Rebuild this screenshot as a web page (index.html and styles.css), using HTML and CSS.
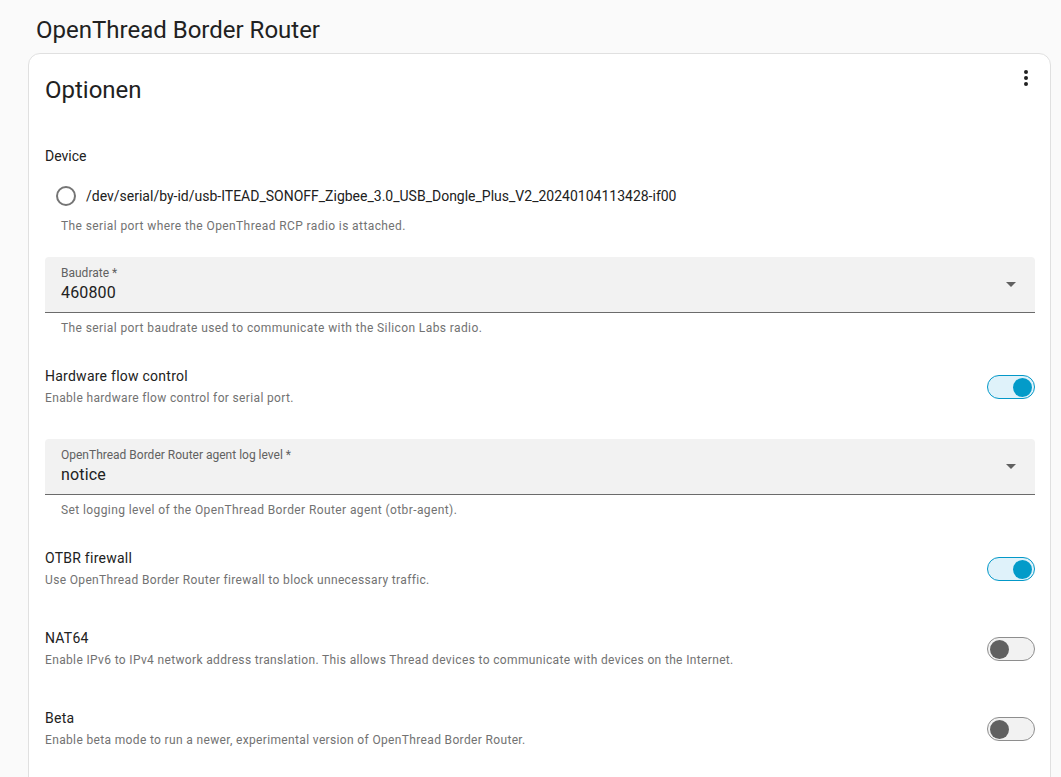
FILE: index.html
```html
<!DOCTYPE html>
<html lang="de">
<head>
  <meta charset="UTF-8">
  <meta name="viewport" content="width=device-width, initial-scale=1.0">
  <title>OpenThread Border Router</title>
  <link rel="stylesheet" href="styles.css">
</head>
<body>
  <div class="page">
    <h1 class="page-title">OpenThread Border Router</h1>

    <div class="card">
      <div class="card-header">
        <h2>Optionen</h2>
        <svg class="menu-icon" viewBox="0 0 24 24" width="24" height="24">
          <path d="M12,16A2,2 0 0,1 14,18A2,2 0 0,1 12,20A2,2 0 0,1 10,18A2,2 0 0,1 12,16M12,10A2,2 0 0,1 14,12A2,2 0 0,1 12,14A2,2 0 0,1 10,12A2,2 0 0,1 12,10M12,4A2,2 0 0,1 14,6A2,2 0 0,1 12,8A2,2 0 0,1 10,6A2,2 0 0,1 12,4Z"/>
        </svg>
      </div>

      <div class="field-label">Device</div>
      <label class="radio-row">
        <span class="radio"></span>
        <span>/dev/serial/by-id/usb-ITEAD_SONOFF_Zigbee_3.0_USB_Dongle_Plus_V2_20240104113428-if00</span>
      </label>
      <div class="helper">The serial port where the OpenThread RCP radio is attached.</div>

      <div class="select">
        <div class="select-text">
          <div class="select-label">Baudrate *</div>
          <div class="select-value">460800</div>
        </div>
        <span class="caret"></span>
      </div>
      <div class="helper helper-field">The serial port baudrate used to communicate with the Silicon Labs radio.</div>

      <div class="switch-row after-helper">
        <div>
          <div class="row-title">Hardware flow control</div>
          <div class="row-desc">Enable hardware flow control for serial port.</div>
        </div>
        <span class="switch on"><span class="knob"></span></span>
      </div>

      <div class="select select-after-row">
        <div class="select-text">
          <div class="select-label">OpenThread Border Router agent log level *</div>
          <div class="select-value">notice</div>
        </div>
        <span class="caret"></span>
      </div>
      <div class="helper helper-field">Set logging level of the OpenThread Border Router agent (otbr-agent).</div>

      <div class="switch-row after-helper">
        <div>
          <div class="row-title">OTBR firewall</div>
          <div class="row-desc">Use OpenThread Border Router firewall to block unnecessary traffic.</div>
        </div>
        <span class="switch on"><span class="knob"></span></span>
      </div>

      <div class="switch-row">
        <div>
          <div class="row-title">NAT64</div>
          <div class="row-desc">Enable IPv6 to IPv4 network address translation. This allows Thread devices to communicate with devices on the Internet.</div>
        </div>
        <span class="switch"><span class="knob"></span></span>
      </div>

      <div class="switch-row">
        <div>
          <div class="row-title">Beta</div>
          <div class="row-desc">Enable beta mode to run a newer, experimental version of OpenThread Border Router.</div>
        </div>
        <span class="switch"><span class="knob"></span></span>
      </div>
    </div>
  </div>
</body>
</html>
```

FILE: styles.css
```css
body { margin: 0; background: #fafafa; font-family: Roboto, "Noto Sans", sans-serif; color: #212121; }
.page { padding: 0 10px 0 28px; }
.page-title { margin: 14px 0 0 8px; font-size: 24px; font-weight: 400; line-height: 32px; }

.card { margin-top: 7px; background: #fff; border: 1px solid #e0e0e0; border-radius: 12px; padding: 0 15px 40px 16px; }
.card-header { display: flex; justify-content: space-between; padding-top: 20px; }
.card-header h2 { margin: 0; font-size: 24px; font-weight: 400; line-height: 32px; }
.menu-icon { fill: #212121; margin: -8px -3px 0 0; }

.field-label { margin-top: 40px; font-size: 14px; line-height: 20px; }
.radio-row { display: flex; align-items: center; gap: 10px; height: 40px; margin-top: 10px; padding-left: 11px; font-size: 14px; }
.radio { width: 20px; height: 20px; box-sizing: border-box; border: 2px solid #757575; border-radius: 50%; }

.helper { margin-top: 2px; padding-left: 16px; font-size: 12px; line-height: 16px; letter-spacing: 0.4px; color: #727272; }
.helper-field { margin-top: 7px; }

.select { display: flex; align-items: center; justify-content: space-between; height: 56px; margin-top: 23px; padding: 0 19px 0 16px; box-sizing: border-box; background: #f2f2f2; border-bottom: 1px solid #6b6b6b; border-radius: 4px 4px 0 0; }
.select-after-row { margin-top: 31px; }
.select-text { align-self: flex-start; padding-top: 8px; }
.select-label { font-size: 12px; line-height: 16px; color: #616161; }
.select-value { font-size: 16px; line-height: 24px; letter-spacing: 0.15px; }
.caret { width: 0; height: 0; border-left: 5px solid transparent; border-right: 5px solid transparent; border-top: 5px solid #616161; }

.switch-row { display: flex; justify-content: space-between; align-items: center; margin-top: 38px; }
.switch-row.after-helper { margin-top: 30px; }
.row-title { font-size: 14px; line-height: 20px; letter-spacing: 0.25px; }
.row-desc { margin-top: 2px; font-size: 12px; line-height: 20px; letter-spacing: 0.35px; color: #727272; }

.switch { display: flex; align-items: center; width: 48px; height: 24px; box-sizing: border-box; padding: 0 2px; border: 1px solid #8e8e8e; border-radius: 12px; background: #f2f2f2; }
.switch .knob { width: 19px; height: 19px; border-radius: 50%; background: #616161; }
.switch.on { justify-content: flex-end; border-color: #0398c8; background: #dff2fa; }
.switch.on .knob { background: #039bc9; }
```
